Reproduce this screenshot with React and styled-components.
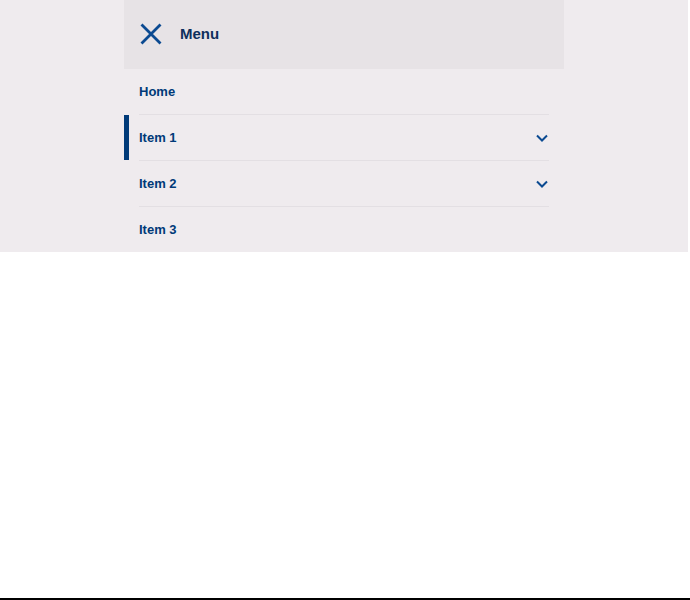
import styled, { createGlobalStyle } from "styled-components";

const GlobalStyle = createGlobalStyle`
  html, body {
    margin: 0;
    padding: 0;
    background: #ffffff;
  }
  body {
    font-family: "Liberation Sans", Arial, sans-serif;
  }
`;

const Page = styled.div`
  box-sizing: border-box;
  height: 600px;
  border-bottom: 2px solid #000000;
`;

const Band = styled.div`
  width: 688px;
  background: #efebee;
  display: flex;
  justify-content: center;
`;

const Panel = styled.nav`
  width: 440px;
  display: flex;
  flex-direction: column;
`;

const Header = styled.div`
  box-sizing: border-box;
  height: 69px;
  background: #e7e3e6;
  display: flex;
  align-items: center;
  gap: 17px;
  padding: 0 15px 2px;
`;

const CloseButton = styled.button`
  border: none;
  background: none;
  padding: 0;
  width: 24px;
  height: 24px;
  display: flex;
  cursor: pointer;
  color: #0b4a91;
`;

const Title = styled.span`
  font-size: 15px;
  font-weight: 700;
  color: #0e2f5c;
`;

const List = styled.ul`
  list-style: none;
  margin: 0;
  padding: 0 15px;
`;

const Item = styled.li`
  position: relative;
  height: 45px;
  display: flex;
  align-items: center;
  justify-content: space-between;
  border-bottom: ${(p) => (p.$last ? "none" : "1px solid #e3dfe3")};
  font-size: 13px;
  font-weight: 700;
  color: #003a78;
  cursor: pointer;

  &::before {
    content: "";
    display: ${(p) => (p.$active ? "block" : "none")};
    position: absolute;
    left: -15px;
    top: 0;
    width: 5px;
    height: 45px;
    background: #003a78;
  }
`;

const Chevron = styled.svg`
  width: 12px;
  height: 8px;
  margin-right: 1px;
  color: #0b4a91;
`;

const items = [
  { name: "Home" },
  { name: "Item 1", sub: true, active: true },
  { name: "Item 2", sub: true },
  { name: "Item 3" },
];

const App = () => {
  return (
    <>
      <GlobalStyle />
      <Page>
        <Band>
          <Panel>
            <Header>
              <CloseButton aria-label="Close menu">
                <svg width="24" height="24" viewBox="0 0 24 24">
                  <path
                    d="M2.5 2.5 L21.5 21.5 M21.5 2.5 L2.5 21.5"
                    stroke="currentColor"
                    strokeWidth="2.8"
                    fill="none"
                  />
                </svg>
              </CloseButton>
              <Title>Menu</Title>
            </Header>
            <List>
              {items.map((item, index) => (
                <Item
                  key={index}
                  $active={item.active}
                  $last={index === items.length - 1}
                >
                  {item.name}
                  {item.sub && (
                    <Chevron viewBox="0 0 12 8">
                      <polyline
                        points="1,1.5 6,6.5 11,1.5"
                        stroke="currentColor"
                        strokeWidth="2"
                        fill="none"
                      />
                    </Chevron>
                  )}
                </Item>
              ))}
            </List>
          </Panel>
        </Band>
      </Page>
    </>
  );
};

export default App;
